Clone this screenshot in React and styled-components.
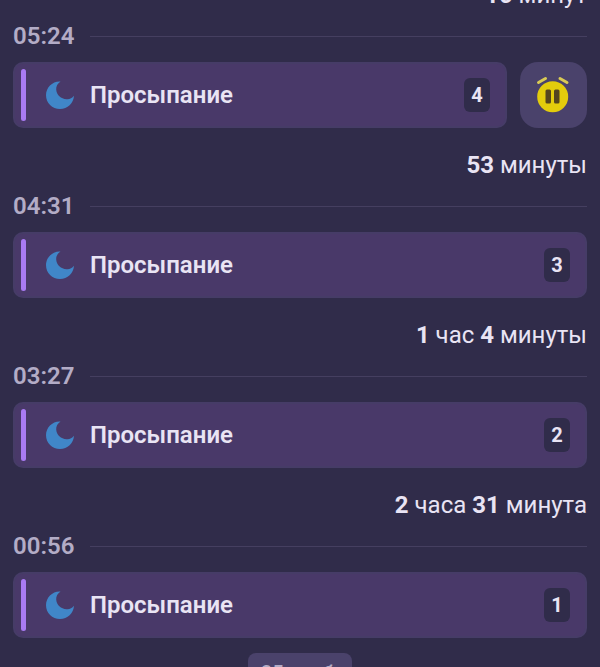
import styled, { createGlobalStyle } from 'styled-components';

const GlobalStyle = createGlobalStyle`
    * {
        box-sizing: border-box;
    }
    body {
        margin: 0;
        overflow: hidden;
        background: #302c4a;
        color: #e9e4f4;
        font-family: Roboto, "Noto Sans", sans-serif;
    }
`
const Page = styled.main`
    height: 100vh;
    overflow: hidden;
    padding: 0 13px;
    display: flex;
    flex-direction: column;
    justify-content: flex-end;
`
const Timeline = styled.ol`
    list-style: none;
    margin: 0;
    padding: 0;
`
const Entry = styled.li`
    display: flex;
    flex-direction: column;
    gap: 12px;
    margin-bottom: 22px;

    &:last-child {
        margin-bottom: 15px;
    }
`
const Duration = styled.p`
    margin: 0;
    text-align: right;
    font-size: 24px;
    line-height: 30px;
`
const TimeRow = styled.div`
    display: flex;
    align-items: center;
    gap: 14px;
    height: 28px;
`
const Time = styled.time`
    min-width: 63px;
    font-size: 24px;
    line-height: 30px;
    font-weight: 600;
    color: #b3acc6;
`
const Line = styled.hr`
    flex: 1;
    margin: 0;
    border: 0;
    border-top: 1px solid #453f60;
`
const CardRow = styled.div`
    display: flex;
    gap: 13px;
    height: 66px;
`
const Card = styled.article`
    flex: 1;
    display: flex;
    align-items: center;
    padding: 0 15px 0 6px;
    border: 2px solid #463c67;
    border-radius: 10px;
    background: #493969;
`
const Accent = styled.span`
    width: 5px;
    height: 52px;
    border-radius: 3px;
    background: #a97bf3;
`
const MoonIcon = styled.svg`
    width: 30px;
    height: 30px;
    margin-left: 19px;
`
const Title = styled.h2`
    flex: 1;
    margin: 0 0 0 15px;
    font-size: 24px;
    line-height: 30px;
    font-weight: 600;
`
const Badge = styled.span`
    width: 26px;
    height: 34px;
    border-radius: 6px;
    background: #302c4a;
    font-size: 20px;
    line-height: 34px;
    font-weight: 700;
    text-align: center;
`
const AlarmButton = styled.button`
    width: 67px;
    padding: 0;
    display: grid;
    place-items: center;
    border: 0;
    border-radius: 18px;
    background: #4a426b;
`
const DayLabel = styled.div`
    align-self: center;
    flex: none;
    width: 104px;
    height: 40px;
    margin-bottom: -26px;
    border-radius: 8px;
    background: #4a426b;
    color: #b3acc6;
    font-size: 20px;
    line-height: 40px;
    font-weight: 500;
    text-align: center;
`

const entries = [
    { time: '05:24', count: 4, duration: [['10', 'минут']], alarm: true },
    { time: '04:31', count: 3, duration: [['53', 'минуты']] },
    { time: '03:27', count: 2, duration: [['1', 'час'], ['4', 'минуты']] },
    { time: '00:56', count: 1, duration: [['2', 'часа'], ['31', 'минута']] },
];

function Moon() {
    return (
        <MoonIcon viewBox="0 0 30 30" aria-hidden="true">
            <path
                fill="#4086c8"
                d="M15.5 1.5C7.500 1 1 7.500 1 15.200C1 23 7.200 29 15 29C22.500 29 28.500 23.500 29 15.800C27 18.500 24.500 19.500 21.500 19.200C16 19 11.500 15 11.200 9.500C11 6.300 12.500 3.500 15.500 1.500Z"
            />
        </MoonIcon>
    )
}

function Alarm() {
    return (
        <AlarmButton type="button" aria-label="Пауза">
            <svg width="35" height="38" viewBox="0 0 35 38">
                <path d="M2.500 6.500L9.500 2.500M24 2.500L31 6.500" stroke="#d9ca55" strokeWidth="3" strokeLinecap="round" />
                <circle cx="16.700" cy="20.700" r="15.500" fill="#e3cc0c" />
                <rect x="9.500" y="13.500" width="5.500" height="14" rx="1.500" fill="#54451f" />
                <rect x="18" y="13.500" width="5.500" height="14" rx="1.500" fill="#54451f" />
            </svg>
        </AlarmButton>
    )
}

function App() {
    return (
        <Page>
            <GlobalStyle />
            <Timeline>
                {
                    entries.map((entry) => (
                        <Entry key={entry.time}>
                            <Duration>
                                {
                                    entry.duration.map(([value, unit]) => (
                                        <span key={unit}><b>{value}</b> {unit} </span>
                                    ))
                                }
                            </Duration>
                            <TimeRow>
                                <Time>{entry.time}</Time>
                                <Line />
                            </TimeRow>
                            <CardRow>
                                <Card>
                                    <Accent />
                                    <Moon />
                                    <Title>Просыпание</Title>
                                    <Badge>{entry.count}</Badge>
                                </Card>
                                {entry.alarm && <Alarm />}
                            </CardRow>
                        </Entry>
                    ))
                }
            </Timeline>
            <DayLabel>25 нояб.</DayLabel>
        </Page>
    )
}
export default App;
